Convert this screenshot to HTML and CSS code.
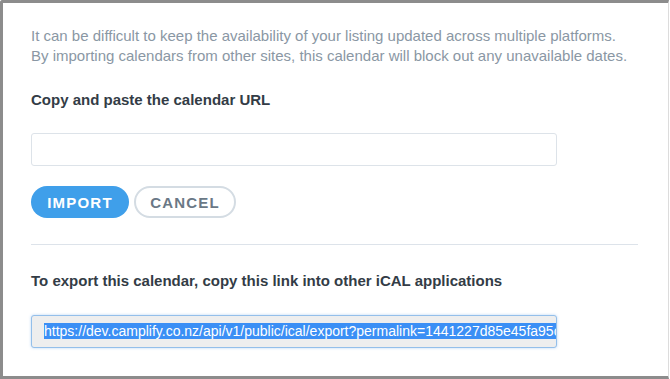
FILE: index.html
```html
<!DOCTYPE html>
<html lang="en">
<head>
    <meta charset="UTF-8">
    <meta name="viewport" content="width=device-width, initial-scale=1.0">
    <title>Calendar sync</title>
    <link rel="stylesheet" href="styles.css">
</head>
<body>
    <div class="modal">
        <p class="intro">It can be difficult to keep the availability of your listing updated across multiple platforms.<br>By importing calendars from other sites, this calendar will block out any unavailable dates.</p>

        <label class="field-label" for="import-url">Copy and paste the calendar URL</label>
        <input type="text" id="import-url" class="text-input">

        <div class="actions">
            <button class="btn btn-primary">IMPORT</button>
            <button class="btn btn-outline">CANCEL</button>
        </div>

        <hr class="divider">

        <label class="field-label export-label" for="export-url">To export this calendar, copy this link into other iCAL applications</label>
        <div class="text-input export-input" id="export-url"><span class="selected">https://dev.camplify.co.nz/api/v1/public/ical/export?permalink=1441227d85e45fa95c</span></div>
    </div>
</body>
</html>
```

FILE: styles.css
```css
* {
    box-sizing: border-box;
}

body {
    margin: 0;
    background-color: #ffffff;
    font-family: "Liberation Sans", Arial, sans-serif;
}

.modal {
    width: 669px;
    height: 379px;
    background-color: white;
    border-top: 3px solid #8c8c8c;
    border-left: 3px solid #8c8c8c;
    border-bottom: 3px solid #8c8c8c;
    border-right: 1px solid #dcdcdc;
    border-top-left-radius: 3px;
    padding: 23px 28px 0;
}

.intro {
    margin: 0;
    font-size: 15px;
    line-height: 20px;
    color: #8a97a4;
}

.field-label {
    display: block;
    font-size: 15px;
    font-weight: bold;
    color: #333c46;
    margin-top: 25px;
}

.export-label {
    margin-top: 27px;
}

.text-input {
    display: block;
    width: 526px;
    height: 33px;
    margin-top: 25px;
    border: 1px solid #dde3e9;
    border-radius: 3px;
    background-color: white;
    font-family: inherit;
    font-size: 14px;
    outline: none;
}

.actions {
    display: flex;
    gap: 5px;
    margin-top: 20px;
}

.btn {
    height: 32px;
    border-radius: 16px;
    font-family: inherit;
    font-size: 15px;
    font-weight: bold;
    letter-spacing: 1.2px;
    cursor: pointer;
}

.btn-primary {
    width: 98px;
    background-color: #3f9fea;
    color: white;
    border: none;
}

.btn-outline {
    width: 102px;
    background-color: white;
    color: #6a7886;
    border: 2px solid #d4dce3;
}

.divider {
    margin: 26px 0 0;
    width: 607px;
    border: none;
    border-top: 1px solid #dde3ea;
}

.export-input {
    margin-top: 26px;
    background-color: #eeeeee;
    border-color: #94bfea;
    box-shadow: 0 0 3px rgba(80, 150, 230, 0.4);
    padding: 0 0 0 12px;
    line-height: 31px;
    overflow: hidden;
    white-space: nowrap;
    color: #222;
}

.selected {
    background-color: #3b8ff5;
    color: white;
}
```
